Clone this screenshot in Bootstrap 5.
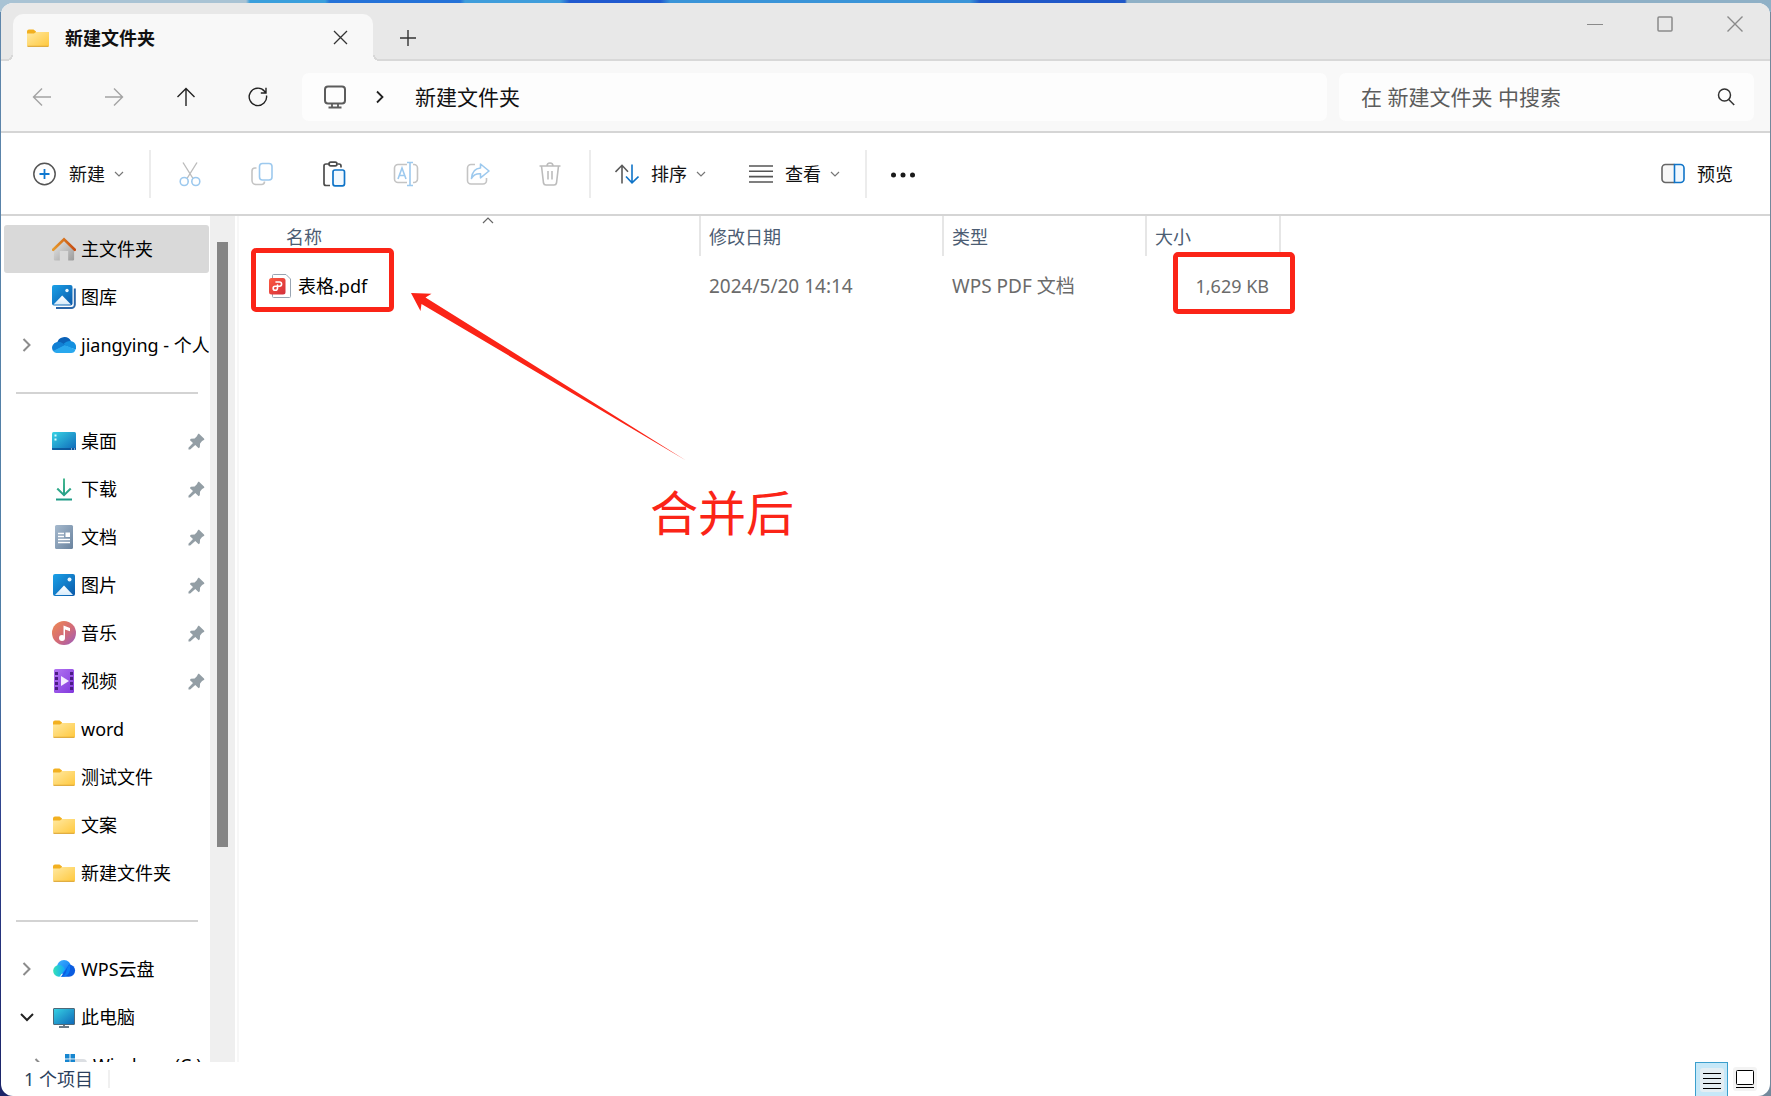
<!DOCTYPE html>
<html lang="zh-CN">
<head>
<meta charset="utf-8">
<meta name="viewport" content="width=device-width, initial-scale=1">
<title>新建文件夹</title>
<link href="https://cdn.jsdelivr.net/npm/bootstrap@5.3.0/dist/css/bootstrap.min.css" rel="stylesheet">
<style>
  body {
    font-family: "Noto Sans", "Noto Sans CJK SC", sans-serif;
    font-size: 18px; line-height: 24px; color: #111;
    background: linear-gradient(90deg, #a9c3d4 0 246px, #3a9fdc 250px 325px, #2472d8 330px 460px, #3f9ddb 465px 560px, #2059cf 570px 660px, #3a94d8 670px 970px, #2058c8 980px 1125px, #8fb0c6 1127px) top / 100% 12px no-repeat,
      linear-gradient(180deg, #5f86ab 0, #4d7da6 60%, #2d3f8c 75%, #1b2468 100%) left / 50% 100% no-repeat, #73899c;
  }
  svg { display: block; flex: none; }
  svg:not([fill]) { fill: none; }
  .win { height: 100vh; padding: 3px 1px 0 1px; }
  .frame { background: #fff; border-radius: 12px; overflow: hidden; }
  .bare { border: 0; background: none; padding: 0; color: inherit; display: flex; align-items: center; justify-content: center; }
  /* title bar */
  .titlebar { background: #e8e8e8; height: 58px; box-shadow: inset 0 -2px #d8d8d8; padding-left: 12px; }
  .tab-active { position: relative; width: 360px; height: 47px; background: #f8f8f8; border-radius: 10px 10px 0 0; padding: 0 25px 0 13px; }
  .tab-active strong { margin-left: 15px; }
  .tab-active::before, .tab-active::after { content: ""; position: absolute; bottom: 0; width: 6px; height: 6px; }
  .tab-active::before { left: -6px; background: radial-gradient(circle at 0 0, #e8e8e8 4px, #d8d8d8 4px 6px, #f8f8f8 6px); }
  .tab-active::after { right: -6px; background: radial-gradient(circle at 100% 0, #e8e8e8 4px, #d8d8d8 4px 6px, #f8f8f8 6px); }
  .tab-new { width: 69px; height: 47px; }
  .win-btn { width: 70px; height: 41px; color: #8a8a8a; }
  /* address row */
  .navrow { background: #f8f8f8; border-bottom: 2px solid #d5d5d5; padding: 11px 16px 10px 5px; height: 72px; }
  .nav-btn { width: 72px; height: 50px; }
  .faded { color: #a3a3a3; }
  .addr, .seek { background: #fdfdfd; border-radius: 7px; height: 48px; font-size: 21px; }
  .addr { margin-left: 8px; margin-right: 12px; padding-left: 21px; }
  .seek { width: 415px; padding: 0 18px 0 22px; }
  .seek input { border: 0; outline: 0; background: none; color: #555; padding: 0; min-width: 0; }
  .seek input::placeholder { color: #5c5c5c; opacity: 1; }
  /* command bar */
  .cmdbar { height: 83px; border-bottom: 2px solid #d5d5d5; padding: 0 28px 0 32px; }
  .vline { width: 2px; height: 48px; background: #ececec; }
  .cmd { height: 48px; }
  .cmd span { margin: 0 9px 0 12px; }
  .cmd + .vline { margin-left: 25px; }
  .vline + .cmd { margin-left: 24px; }
  .cmd + .cmd-view { margin-left: 43px; }
  .cmd-group { margin: 0 3px; }
  .cmd-icon { width: 72px; height: 48px; }
  /* side pane */
  .panes { min-height: 0; }
  .side { width: 209px; overflow: hidden; padding: 9px 0 0 3px; }
  .side a { height: 48px; color: #000; text-decoration: none; white-space: nowrap; border-radius: 3px; width: 205px; overflow: hidden; }
  .side a.current { background: #d9d9d9; }
  .twist { width: 45px; margin-right: 3px; display: flex; justify-content: center; flex: none; }
  .side a.nested { padding-left: 12px; }
  .label { margin-left: 5px; }
  .pin { margin-left: auto; margin-right: 4px; }
  .rule { height: 48px; padding: 23px 12px 0 12px; }
  .rule hr { margin: 0; border: 0; height: 2px; background: #d3d3d3; opacity: 1; }
  .track { width: 25px; background: #efefef; padding-left: 7px; }
  .track div { width: 11px; background: #858585; height: 71.5%; margin-top: 26px; }
  .files { position: relative; margin-left: 2px; border-left: 2px solid #f7f7f7; overflow: hidden; }
  .filelist { table-layout: fixed; width: 1042px; border-collapse: separate; border-spacing: 0; }
  .filelist th { height: 40px; position: relative; font-weight: 400; color: #4c5d73; padding: 2px 0 0 8px; border-right: 2px solid #e6e6e6; }
  .filelist th:first-child { padding-left: 47px; }
  .filelist td { height: 60px; padding: 0 0 0 8px; color: #6b6b6b; white-space: nowrap; }
  .filelist td:first-child { padding-left: 30px; color: #000; }
  .filelist td.wide { font-size: 19px; }
  .filelist td.amount { text-align: right; padding-right: 12px; }
  .sortmark { position: absolute; top: 0; left: calc(50% + 13px); }
  /* red annotations drawn over the list */
  .ring { position: absolute; border: 5px solid #fb2417; border-radius: 5px; }
  .ring-name { left: 12px; top: 32px; width: 143px; height: 64px; }
  .ring-size { left: 934px; top: 36px; width: 122px; height: 62px; }
  .arrow { position: absolute; left: 161px; top: 64px; }
  .caption-red { position: absolute; left: 411px; top: 267px; font-size: 48px; line-height: 60px; color: #fb2417; }
  .status { height: 34px; color: #2b3f5c; padding: 0 9px 0 23px; }
  .status .vline { height: 18px; background: #f0f0f0; margin-left: 15px; }
  .mode { width: 33px; height: 34px; }
  .mode.on { background: #c6e8f8; border: 1px solid #3b9fcd; border-bottom: 0; }
</style>
</head>
<body>
<svg width="0" height="0" class="position-absolute" aria-hidden="true">
  <defs>
    <linearGradient id="gFold" x1="0" y1="0" x2="1" y2="1"><stop offset="0" stop-color="#ffe9a2"/><stop offset="1" stop-color="#ffc83d"/></linearGradient>
    <linearGradient id="gBlue" x1="0" y1="0" x2="1" y2="1"><stop offset="0" stop-color="#1ba1e8"/><stop offset="1" stop-color="#0a58a8"/></linearGradient>
    <linearGradient id="gTeal" x1="0" y1="0" x2="1" y2="1"><stop offset="0" stop-color="#37d3e4"/><stop offset="1" stop-color="#0e66b8"/></linearGradient>
    <linearGradient id="gRoof" x1="0" y1="0" x2="1" y2="0"><stop offset="0" stop-color="#e79a2c"/><stop offset="1" stop-color="#c64c12"/></linearGradient>
    <linearGradient id="gWall" x1="0" y1="0" x2="1" y2="1"><stop offset="0" stop-color="#e8e8e8"/><stop offset="1" stop-color="#9b9b9b"/></linearGradient>
    <linearGradient id="gDoc" x1="0" y1="0" x2="1" y2="1"><stop offset="0" stop-color="#a6bace"/><stop offset="1" stop-color="#69829e"/></linearGradient>
    <linearGradient id="gMusic" x1="0" y1="0" x2="1" y2="1"><stop offset="0" stop-color="#f08a50"/><stop offset=".55" stop-color="#d26a78"/><stop offset="1" stop-color="#9a5cc0"/></linearGradient>
    <linearGradient id="gVideo" x1="0" y1="0" x2="1" y2="1"><stop offset="0" stop-color="#b273f2"/><stop offset="1" stop-color="#8138dc"/></linearGradient>
    <linearGradient id="gMount" x1="0" y1="0" x2="0" y2="1"><stop offset="0" stop-color="#fff"/><stop offset="1" stop-color="#d8ecfb"/></linearGradient>
    <linearGradient id="gDown" x1="0" y1="0" x2="0" y2="1"><stop offset="0" stop-color="#47b890"/><stop offset="1" stop-color="#1c9a86"/></linearGradient>
    <linearGradient id="gPdf" x1="0" y1="0" x2="1" y2="1"><stop offset="0" stop-color="#ff5a3f"/><stop offset="1" stop-color="#d22f3c"/></linearGradient>
    <linearGradient id="gWpsA" x1="0" y1="0" x2="1" y2="1"><stop offset="0" stop-color="#3db4ff"/><stop offset="1" stop-color="#0a72f0"/></linearGradient>
    <linearGradient id="gWpsB" x1="0" y1="0" x2="1" y2="0"><stop offset="0" stop-color="#35e2b8"/><stop offset="1" stop-color="#12a8f8"/></linearGradient>
    <symbol id="folder" viewBox="0 0 24 24"><path d="M1 5.500a2 2 0 0 1 2-2h4.500l2.500 2v4H1z" fill="#f2b020"/><path d="M1 7.500h7l2-1.500h13v13.500a1 1 0 0 1-1 1H2a1 1 0 0 1-1-1z" fill="url(#gFold)"/><path d="M1.500 20.300h21" stroke="#d99f2a"/></symbol>
    <symbol id="pinned" viewBox="0 0 18 18"><path d="M10.500 1.200c.5-.5 1.200-.5 1.700 0l4.700 4.500c.6.600.5 1.300-.1 1.700l-1.900 1-2.100 2.600-.3 4-1.200 1.200-3.600-3.500L2.300 17.500H.5v-1.800L5.300 10.700 1.900 7.400l1.200-1.300 3.900-.3 2.400-2.400z" fill="#939ea5"/></symbol>
    <symbol id="right" viewBox="0 0 14 14"><path d="M3.500 1 9.500 7l-6 6" stroke="#8c8c8c" stroke-width="2"/></symbol>
    <symbol id="drop" viewBox="0 0 10 10"><path d="m1 3 4 4 4-4" stroke="#777" stroke-width="1.200"/></symbol>
  </defs>
</svg>

<div class="win">
<div class="frame d-flex flex-column h-100">
  <header class="titlebar d-flex align-items-start flex-shrink-0">
    <div class="tab-active d-flex align-items-center align-self-end">
      <svg width="24" height="24"><use href="#folder"/></svg>
      <strong>新建文件夹</strong>
      <button class="bare ms-auto" aria-label="关闭标签页"><svg width="15" height="15" stroke="#333" stroke-width="1.300"><path d="m1 1 13 13M14 1 1 14"/></svg></button>
    </div>
    <button class="bare tab-new align-self-end" aria-label="新标签页"><svg width="16" height="16" stroke="#333" stroke-width="1.400"><path d="M8 0v16M0 8h16"/></svg></button>
    <div class="d-flex ms-auto">
      <button class="bare win-btn" aria-label="最小化"><svg width="16" height="16" stroke="currentColor" stroke-width="1.200"><path d="M0 8.500h16"/></svg></button>
      <button class="bare win-btn" aria-label="最大化"><svg width="16" height="16" stroke="currentColor" stroke-width="1.500"><rect x="1" y="1" width="14" height="14" rx="1"/></svg></button>
      <button class="bare win-btn" aria-label="关闭"><svg width="16" height="16" stroke="currentColor" stroke-width="1.400"><path d="m.5.500 15 15M15.500.500l-15 15"/></svg></button>
    </div>
  </header>

  <div class="navrow d-flex align-items-center flex-shrink-0">
    <button class="bare nav-btn faded" aria-label="后退"><svg width="20" height="20" stroke="currentColor" stroke-width="1.400"><path d="M19 10H1.500M10 1.500 1.500 10l8.500 8.500"/></svg></button>
    <button class="bare nav-btn faded" aria-label="前进"><svg width="20" height="20" stroke="currentColor" stroke-width="1.400"><path d="M1 10h17.500M10 1.500l8.500 8.500-8.500 8.500"/></svg></button>
    <button class="bare nav-btn" aria-label="上移"><svg width="20" height="20" stroke="#222" stroke-width="1.400"><path d="M10 19V1.500M1.500 10 10 1.500l8.500 8.500"/></svg></button>
    <button class="bare nav-btn" aria-label="刷新"><svg width="20" height="20" stroke="#222" stroke-width="1.400"><path d="M18.500 8.500A8.700 8.700 0 1 1 16.500 4.200L18 6M18 .8V6h-5.200"/></svg></button>
    <nav class="addr flex-fill d-flex align-items-center" aria-label="地址">
      <svg width="24" height="24" stroke="#5c5c5c" stroke-width="2"><rect x="2" y="1.500" width="20" height="17" rx="3"/><path d="M9 18.500V22M15 18.500V22M5.500 22.500h13" stroke-width="1.800"/></svg>
      <svg class="ms-4 me-4" width="16" height="16" stroke="#222" stroke-width="1.800"><path d="m6 2.500 5.500 5.500L6 13.500"/></svg>
      <span class="ps-1">新建文件夹</span>
    </nav>
    <label class="seek d-flex align-items-center">
      <input class="flex-fill" type="text" aria-label="搜索" placeholder="在 新建文件夹 中搜索">
      <svg width="20" height="20" stroke="#333" stroke-width="1.500"><circle cx="8.500" cy="8" r="6"/><path d="m12.700 12.500 5.500 5.500"/></svg>
    </label>
  </div>

  <div class="cmdbar d-flex align-items-center flex-shrink-0">
    <button class="bare cmd"><svg width="24" height="24" stroke-width="1.500"><circle cx="11.500" cy="12" r="10.700" stroke="#555"/><path d="M11.500 7v10M6.500 12h10" stroke="#0f78d0" stroke-width="1.800"/></svg><span>新建</span><svg width="10" height="10"><use href="#drop"/></svg></button>
    <div class="vline"></div>
    <div class="cmd-group d-flex">
    <button class="bare cmd-icon" aria-label="剪切"><svg width="24" height="26" stroke-width="1.400"><path d="M5 1.500 15 17.500M19 1.500 9 17.500" stroke="#bcbcbc"/><g stroke="#9dc9ee" stroke-width="1.600"><circle cx="6.200" cy="20.500" r="4"/><circle cx="17.800" cy="20.500" r="4"/></g></svg></button>
    <button class="bare cmd-icon" aria-label="复制"><svg width="24" height="26" stroke-width="1.600"><path d="M6.500 7H5a3 3 0 0 0-3 3v9.500a4 4 0 0 0 4 4h5.500a3 3 0 0 0 3-3" stroke="#c4c4c4"/><rect x="9.500" y="2.500" width="12.500" height="16.500" rx="3" stroke="#9dc9ee"/></svg></button>
    <button class="bare cmd-icon" aria-label="粘贴"><svg width="24" height="26" stroke-width="1.700"><path d="M7.500 3H4A2 2 0 0 0 2 5v17.500a2 2 0 0 0 2 2h4M15.500 3h1.500a2 2 0 0 1 2 2v1.500" stroke="#4c4c4c"/><rect x="7" y="1.200" width="8" height="3.600" rx="1.800" stroke="#4c4c4c"/><rect x="11" y="9" width="11.500" height="15.800" rx="2" stroke="#0f74c8" fill="#f2f9ff"/></svg></button>
    <button class="bare cmd-icon" aria-label="重命名"><svg width="26" height="26" stroke-width="1.600"><path d="M14 3.500H5a3.500 3.500 0 0 0-3.500 3.500v11A3.500 3.500 0 0 0 5 21.500h9M20 3.500h1a3.500 3.500 0 0 1 3.500 3.500v11a3.500 3.500 0 0 1-3.500 3.500h-1" stroke="#c4c4c4"/><path d="M5 18 9 7l4 11M6.500 14.500h5M17 1.500v22.500M14 1.500h6M14 24.500h6" stroke="#9dc9ee"/></svg></button>
    <button class="bare cmd-icon" aria-label="共享"><svg width="26" height="26" stroke-width="1.600"><path d="M10 3.500H6A3.500 3.500 0 0 0 2.500 7v12.500A3.500 3.500 0 0 0 6 23h12a3.500 3.500 0 0 0 3.500-3.500V17" stroke="#c4c4c4"/><path d="M15.500 3 24 10l-8.500 6.800v-4C10.500 12.500 8 14.500 6.500 17.500 7 11 10.500 7.300 15.500 7z" stroke="#9dc9ee" stroke-linejoin="round"/></svg></button>
    <button class="bare cmd-icon" aria-label="删除"><svg width="24" height="26" stroke="#bcbcbc" stroke-width="1.600"><path d="M1.500 5h21M9 5a3 3 0 0 1 6 0M3.500 5l2 17a2.500 2.500 0 0 0 2.500 2h8a2.500 2.500 0 0 0 2.500-2l2-17M10 10v8.500M14 10v8.500"/></svg></button>
    </div>
    <div class="vline"></div>
    <button class="bare cmd"><svg width="24" height="24" viewBox="1 0 24 24" stroke-width="1.600"><path d="M8 21.500V3.500M1.500 10 8 3.300l6 6.500" stroke="#5a5a5a"/><path d="M18 2.500v18M12 14.500l6 6.300 6.500-6.300" stroke="#0f74c8"/></svg><span>排序</span><svg width="10" height="10"><use href="#drop"/></svg></button>
    <button class="bare cmd cmd-view"><svg width="24" height="24" stroke="#555" stroke-width="1.600"><path d="M0 4h24M0 9.300h24M0 14.600h24M0 20h24"/></svg><span>查看</span><svg width="10" height="10"><use href="#drop"/></svg></button>
    <div class="vline"></div>
    <button class="bare cmd" aria-label="更多"><svg width="26" height="8" fill="#1a1a1a"><circle cx="2.500" cy="5" r="2.500"/><circle cx="12" cy="5" r="2.500"/><circle cx="21.500" cy="5" r="2.500"/></svg></button>
    <button class="bare cmd ms-auto"><svg width="24" height="24" stroke-width="1.600"><path d="M13.500 2.500H4.500A3.500 3.500 0 0 0 1 6v11a3.500 3.500 0 0 0 3.500 3.500h9" stroke="#666" fill="#f7f7f7"/><path d="M13.500 2.500h6A3.500 3.500 0 0 1 23 6v11a3.500 3.500 0 0 1-3.500 3.500h-6z" stroke="#0f74c8" fill="#f0f8ff"/></svg><span>预览</span></button>
  </div>

  <div class="panes d-flex flex-fill overflow-hidden">
    <nav class="side flex-shrink-0" aria-label="导航窗格">
      <a class="current d-flex align-items-center" href="#"><span class="twist"></span><svg width="24" height="24"><path d="M3.500 11 12 3l8.500 8v11.500a1 1 0 0 1-1 1H15.500V14h-7v9.500H4.500a1 1 0 0 1-1-1z" transform="translate(-2.300) scale(1.190 1)" fill="url(#gWall)"/><path d="M1.200 12.800 12 2.200l10.800 10.600" stroke="url(#gRoof)" stroke-width="2.600" stroke-linecap="round"/></svg><span class="label">主文件夹</span></a>
      <a class="d-flex align-items-center" href="#"><span class="twist"></span><svg width="24" height="24"><path d="M22.800 3.500v16a3.500 3.500 0 0 1-3.500 3.500H4" stroke="#2a66a8" stroke-width="2"/><rect width="20.500" height="20.500" rx="2" fill="url(#gBlue)"/><path d="m1.500 19.500 8.700-9 8.800 9z" fill="url(#gMount)"/><circle cx="15" cy="5.500" r="1.700" fill="#e8f6ff"/></svg><span class="label">图库</span></a>
      <a class="d-flex align-items-center" href="#"><span class="twist"><svg width="14" height="14"><use href="#right"/></svg></span><svg width="24" height="24"><path d="M5 10.500a7.500 7.500 0 0 1 14-2.500L14 15z" fill="#0b62b8"/><path d="M5.500 20A5.500 5.500 0 0 1 5 9.300c2.500-.6 4 .1 5.500 1L16 14 5.500 20z" fill="#1180d4"/><path d="M18 8a6.200 6.200 0 0 1 5.700 8.500L17 14.500l-5.500-3.500c2-2 4-3 6.500-3z" fill="#1490df"/><path d="M1 17.800 12.500 12l11 4.500A4.600 4.600 0 0 1 19 20H5.500c-2 0-3.700-.8-4.500-2.200z" fill="#29a8ee"/><path d="M5.500 9.200A5.600 5.600 0 0 0 1 17.900L12.600 12 10 10.300C8.500 9.300 7 9 5.500 9.200z" fill="#1180d4"/></svg><span class="label">jiangying - 个人</span></a>
      <div class="rule"><hr></div>
      <a class="d-flex align-items-center" href="#"><span class="twist"></span><svg width="24" height="24"><rect y="3" width="24" height="18" rx="1.500" fill="url(#gTeal)"/><path d="M2.500 5.500h2v2h-2zM2.500 9.500h2v2h-2z" fill="#d7fbff"/><path d="M0 20h24" stroke="#0a4c92" stroke-width="1.500"/><path d="M19 20h1M22 20h1" stroke="#fff"/></svg><span class="label">桌面</span><svg class="pin" width="17" height="17"><use href="#pinned"/></svg></a>
      <a class="d-flex align-items-center" href="#"><span class="twist"></span><svg width="24" height="24" fill="url(#gDown)"><path d="M11 1.500h2v14.200l5-5 1.500 1.500L12 19.500l-7.500-7.300L6 10.700l5 5zM4 21.500h16v2H4z"/></svg><span class="label">下载</span><svg class="pin" width="17" height="17"><use href="#pinned"/></svg></a>
      <a class="d-flex align-items-center" href="#"><span class="twist"></span><svg width="24" height="24"><rect x="3" width="18" height="24" rx="1.500" fill="url(#gDoc)"/><path d="M6 8.500h6M6 11.500h6M6 14.500h12M6 17.500h12" stroke="#fff" stroke-width="1.300"/><rect x="13.500" y="7.500" width="4.500" height="4.500" fill="#fff"/></svg><span class="label">文档</span><svg class="pin" width="17" height="17"><use href="#pinned"/></svg></a>
      <a class="d-flex align-items-center" href="#"><span class="twist"></span><svg width="24" height="24"><rect x="1" y="1" width="22" height="22" rx="2" fill="url(#gBlue)"/><path d="m3 22 9-9.500 9 9.500z" fill="url(#gMount)"/><circle cx="17.500" cy="6.500" r="2" fill="#e8f6ff"/></svg><span class="label">图片</span><svg class="pin" width="17" height="17"><use href="#pinned"/></svg></a>
      <a class="d-flex align-items-center" href="#"><span class="twist"></span><svg width="24" height="24"><circle cx="12" cy="12" r="12" fill="url(#gMusic)"/><circle cx="10" cy="17" r="3" fill="#fff"/><path d="M11.500 4.500 18 7v3.300l-5-1.800V17h-1.500z" fill="#fff"/></svg><span class="label">音乐</span><svg class="pin" width="17" height="17"><use href="#pinned"/></svg></a>
      <a class="d-flex align-items-center" href="#"><span class="twist"></span><svg width="24" height="24"><rect x="2" width="20" height="24" rx="1.500" fill="url(#gVideo)"/><path d="M4.500 3v20M19.500 3v20" stroke="#4b1d84" stroke-width="3" stroke-dasharray="3 2"/><path d="m9 7 8 5-8 5z" fill="#f5ecff"/></svg><span class="label">视频</span><svg class="pin" width="17" height="17"><use href="#pinned"/></svg></a>
      <a class="d-flex align-items-center" href="#"><span class="twist"></span><svg width="24" height="24"><use href="#folder"/></svg><span class="label">word</span></a>
      <a class="d-flex align-items-center" href="#"><span class="twist"></span><svg width="24" height="24"><use href="#folder"/></svg><span class="label">测试文件</span></a>
      <a class="d-flex align-items-center" href="#"><span class="twist"></span><svg width="24" height="24"><use href="#folder"/></svg><span class="label">文案</span></a>
      <a class="d-flex align-items-center" href="#"><span class="twist"></span><svg width="24" height="24"><use href="#folder"/></svg><span class="label">新建文件夹</span></a>
      <div class="rule"><hr></div>
      <a class="d-flex align-items-center" href="#"><span class="twist"><svg width="14" height="14"><use href="#right"/></svg></span><svg width="24" height="24"><circle cx="12" cy="10" r="7" fill="url(#gWpsA)"/><path d="M17 7.500a6 6 0 0 1 0 12.200H9z" fill="#0b5ce0"/><path d="M7 8c3 0 5 1.500 6 4.500l-5.500 7.200H7A5.800 5.800 0 0 1 7 8z" fill="url(#gWpsB)"/><path d="M7.500 19.700c4 0 6-2 7-6.200.8-3 1.500-4.500 3-6 2 5-.5 12.200-7 12.200z" fill="#0a7cf4"/></svg><span class="label">WPS云盘</span></a>
      <a class="d-flex align-items-center" href="#"><span class="twist"><svg width="14" height="14"><path d="m1 4 6 6 6-6" stroke="#222" stroke-width="2"/></svg></span><svg width="24" height="24"><rect x="1.500" y="3.500" width="21" height="16" rx=".5" fill="url(#gTeal)" stroke="#4e6878"/><path d="M12 20v2M7 22h10" stroke="#6b7a86" stroke-width="2"/></svg><span class="label">此电脑</span></a>
      <a class="nested d-flex align-items-center" href="#"><span class="twist"><svg width="14" height="14"><use href="#right"/></svg></span><svg width="24" height="24"><rect x="1" y="6" width="22" height="14" rx="4" fill="#dcdfe3"/><path d="M1 1h4.500v4.500H1zM6.500 1H11v4.500H6.500zM1 6.500h4.500V11H1zM6.500 6.500H11V11H6.500z" fill="#1686d0"/></svg><span class="label">Windows (C:)</span></a>
    </nav>
    <div class="track flex-shrink-0" aria-hidden="true"><div></div></div>
    <main class="files flex-fill">
      <table class="filelist">
        <colgroup><col width="462"><col width="243"><col width="203"><col width="134"></colgroup>
        <thead><tr>
          <th>名称<svg class="sortmark" width="12" height="9" stroke="#666" stroke-width="1.200"><path d="m1 7 5-5 5 5"/></svg></th><th>修改日期</th><th>类型</th><th>大小</th>
        </tr></thead>
        <tbody><tr>
          <td><div class="d-flex align-items-center"><svg width="24" height="24"><path d="M3.500 4V1.500a1 1 0 0 1 1-1H17L21.500 5v17.500a1 1 0 0 1-1 1h-16a1 1 0 0 1-1-1V20" stroke="#98a4b2" fill="#fff"/><rect y="4" width="16.500" height="16.500" rx="2.500" fill="url(#gPdf)"/><path d="M7 8h3.500a2 2 0 0 1 0 4.200H6.200a2 2 0 0 0 0 4.100c1.700 0 2.300-1 2.300-2.300v-3" stroke="#fff" stroke-width="1.600" stroke-linecap="round"/></svg><span class="label">表格.pdf</span></div></td>
          <td class="wide">2024/5/20 14:14</td><td class="wide">WPS PDF 文档</td><td class="amount">1,629 KB</td>
        </tr></tbody>
      </table>
      <div class="ring ring-name"></div>
      <div class="ring ring-size"></div>
      <svg class="arrow" width="300" height="190" viewBox="400 280 300 190"><path d="M411 293 431.500 293.700 425.500 297.500 686 460.500 421.500 304 420.500 311z" fill="#fb2417"/></svg>
      <div class="caption-red">合并后</div>
    </main>
  </div>

  <footer class="status d-flex align-items-center flex-shrink-0">
    <span>1 个项目</span><div class="vline"></div>
    <button class="bare mode on ms-auto" aria-label="详细信息"><svg width="24" height="24"><rect width="24" height="24" rx="3" fill="#e4eef3"/><path d="M3 5.500h18M3 10.500h18M3 15.500h18M3 20.500h18" stroke="#000"/></svg></button>
    <button class="bare mode" aria-label="大图标"><svg width="24" height="24"><rect width="24" height="24" rx="3" fill="#f3f3f3"/><rect x="3.500" y="3.500" width="17" height="14" rx="1" stroke="#000" fill="#fff"/><path d="M3 20.500h18" stroke="#000"/></svg></button>
  </footer>
</div>
</div>
<script src="https://cdn.jsdelivr.net/npm/bootstrap@5.3.0/dist/js/bootstrap.bundle.min.js"></script>
</body>
</html>
